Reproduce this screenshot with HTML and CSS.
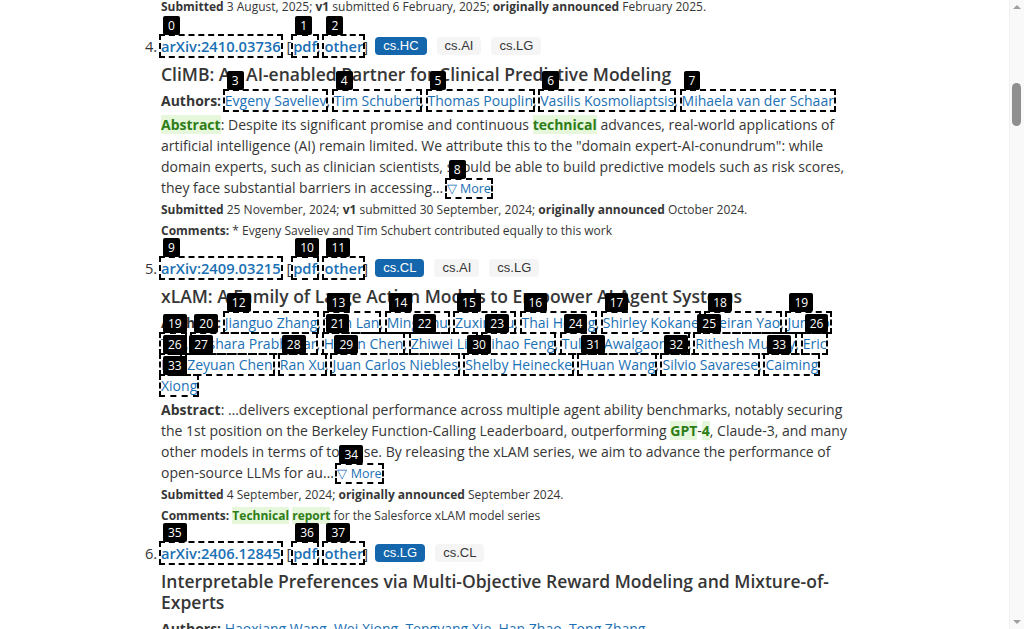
FILE: index.html
```html
<!DOCTYPE html>
<html>
<head>
<meta charset="utf-8">
<title>arXiv search results</title>
<link rel="stylesheet" href="styles.css">
</head>
<body>
<div class="page">
<main class="content">
<div class="prev">
<p class="meta top"><b>Submitted</b> 3 August, 2025; <b>v1</b> submitted 6 February, 2025; <b>originally announced</b> February 2025.</p>
</div>
<ol class="results" start="4">
<li class="result">
<p class="list-title"><a class="el id">arXiv:2410.03736<span class="lbl">0</span></a> <span class="fmt">[<a class="el">pdf<span class="lbl">1</span></a>, <a class="el">other<span class="lbl">2</span></a>]</span><span class="tags"><span class="tag primary">cs.HC</span><span class="tag">cs.AI</span><span class="tag">cs.LG</span></span></p>
<p class="title">CliMB: An AI-enabled Partner for Clinical Predictive Modeling</p>
<p class="authors"><span class="lab">Authors:</span> <a class="el">Evgeny Saveliev<span class="lbl">3</span></a>, <a class="el">Tim Schubert<span class="lbl">4</span></a>, <a class="el">Thomas Pouplin<span class="lbl">5</span></a>, <a class="el">Vasilis Kosmoliaptsis<span class="lbl">6</span></a>, <a class="el">Mihaela van der Schaar<span class="lbl">7</span></a></p>
<p class="abstract"><span class="hit">Abstract</span>: Despite its significant promise and continuous <span class="hit">technical</span> advances, real-world applications of artificial intelligence (AI) remain limited. We attribute this to the "domain expert-AI-conundrum": while domain experts, such as clinician scientists, should be able to build predictive models such as risk scores, they face substantial barriers in accessing&hellip; <a class="el more">&#9661; More<span class="lbl">8</span></a></p>
<p class="meta"><b>Submitted</b> 25 November, 2024; <b>v1</b> submitted 30 September, 2024; <b>originally announced</b> October 2024.</p>
<p class="meta comments"><b>Comments:</b> * Evgeny Saveliev and Tim Schubert contributed equally to this work</p>
</li>
<li class="result">
<p class="list-title"><a class="el id">arXiv:2409.03215<span class="lbl">9</span></a> <span class="fmt">[<a class="el">pdf<span class="lbl">10</span></a>, <a class="el">other<span class="lbl">11</span></a>]</span><span class="tags"><span class="tag primary">cs.CL</span><span class="tag">cs.AI</span><span class="tag">cs.LG</span></span></p>
<p class="title">xLAM: A Family of Large Action Models to Empower AI Agent Systems</p>
<p class="authors"><span class="lab">Authors:</span> <a class="el">Jianguo Zhang<span class="lbl">12</span></a>, <a class="el">Tian Lan<span class="lbl">13</span></a>, <a class="el">Ming Zhu<span class="lbl">14</span></a>, <a class="el">Zuxin Liu<span class="lbl">15</span></a>, <a class="el">Thai Hoang<span class="lbl">16</span></a>, <a class="el">Shirley Kokane<span class="lbl">17</span></a>, <a class="el">Weiran Yao<span class="lbl">18</span></a>, <a class="split"><span class="el">Juntao<span class="lbl">19</span></span> <span class="el">Tan<span class="lbl">19</span></span></a>, <a class="el">Akshara Prabhakar<span class="lbl">20</span></a>, <a class="el">Haolin Chen<span class="lbl">21</span></a>, <a class="el">Zhiwei Liu<span class="lbl">22</span></a>, <a class="el">Yihao Feng<span class="lbl">23</span></a>, <a class="el">Tulika Awalgaonkar<span class="lbl">24</span></a>, <a class="el">Rithesh Murthy<span class="lbl">25</span></a>, <a class="split"><span class="el">Eric<span class="lbl">26</span></span> <span class="el">Hu<span class="lbl">26</span></span></a>, <a class="el">Zeyuan Chen<span class="lbl">27</span></a>, <a class="el">Ran Xu<span class="lbl">28</span></a>, <a class="el">Juan Carlos Niebles<span class="lbl">29</span></a>, <a class="el">Shelby Heinecke<span class="lbl">30</span></a>, <a class="el">Huan Wang<span class="lbl">31</span></a>, <a class="el">Silvio Savarese<span class="lbl">32</span></a>, <a class="split"><span class="el">Caiming<span class="lbl">33</span></span> <span class="el">Xiong<span class="lbl">33</span></span></a></p>
<p class="abstract"><span class="lab">Abstract</span>: &hellip;delivers exceptional performance across multiple agent ability benchmarks, notably securing the 1st position on the Berkeley Function-Calling Leaderboard, outperforming <span class="hit">GPT</span>-<span class="hit">4</span>, Claude-3, and many other models in terms of tool use. By releasing the xLAM series, we aim to advance the performance of open-source LLMs for au&hellip; <a class="el more">&#9661; More<span class="lbl">34</span></a></p>
<p class="meta"><b>Submitted</b> 4 September, 2024; <b>originally announced</b> September 2024.</p>
<p class="meta comments"><b>Comments:</b> <span class="hit">Technical</span> <span class="hit">report</span> for the Salesforce xLAM model series</p>
</li>
<li class="result">
<p class="list-title"><a class="el id">arXiv:2406.12845<span class="lbl">35</span></a> <span class="fmt">[<a class="el">pdf<span class="lbl">36</span></a>, <a class="el">other<span class="lbl">37</span></a>]</span><span class="tags"><span class="tag primary">cs.LG</span><span class="tag">cs.CL</span></span></p>
<p class="title">Interpretable Preferences via Multi-Objective Reward Modeling and Mixture-of-Experts</p>
<p class="authors"><span class="lab">Authors:</span> <a class="plain">Haoxiang Wang</a>, <a class="plain">Wei Xiong</a>, <a class="plain">Tengyang Xie</a>, <a class="plain">Han Zhao</a>, <a class="plain">Tong Zhang</a></p>
</li>
</ol>
</main>
</div>
<div class="scrollbar" aria-hidden="true">
<span class="arrow up"></span>
<span class="thumb"></span>
<span class="arrow down"></span>
</div>
</body>
</html>
```

FILE: styles.css
```css
html, body {
  margin: 0;
  height: 100%;
  overflow: hidden;
  background: #fff;
}
body {
  font-family: "Open Sans", "Liberation Sans", sans-serif;
  color: #363636;
}
.page {
  padding-right: 15px;
}
.content {
  margin-top: -2px;
}
p { margin: 0; }
a { color: #1a70b5; text-decoration: none; }
b { font-weight: 700; }

.prev {
  padding-left: 161px;
}
.meta {
  font-size: 12px;
  line-height: 18px;
  margin-top: 2px;
}
.meta.top { margin-top: 0; }
.meta.comments { margin-top: 3.5px; }

.results {
  margin: 18px 0 0;
  padding: 0 0 0 161px;
  max-width: 690px;
}
.result {
  font-size: 14.7px;
  margin-bottom: 16px;
}
.list-title {
  height: 24px;
  line-height: 24px;
}
.list-title .id,
.list-title .fmt a {
  font-weight: 600;
}
.fmt {
  margin-left: 2px;
}
.fmt a:first-child {
  margin-left: 2px;
}
.tags {
  display: inline-flex;
  gap: 10px;
  margin-left: 7px;
  vertical-align: top;
  padding-top: 3px;
}
.tag {
  font-family: "Liberation Sans", Arial, sans-serif;
  font-size: 13px;
  height: 18px;
  line-height: 18px;
  padding: 0 8px;
  border-radius: 4px;
  background: #f5f5f5;
  color: #363636;
}
.tag.primary {
  background: #1467ac;
  color: #fff;
}

.title {
  font-size: 17.5px;
  font-weight: 600;
  line-height: 21px;
  margin-top: 6px;
}
.authors {
  font-size: 14px;
  line-height: 21px;
  margin-top: 4.5px;
}
.lab { font-weight: 700; }
.abstract {
  font-size: 14px;
  line-height: 21px;
  margin-top: 3px;
}
.hit {
  color: #2e7d17;
  background: #e6f7dc;
  font-weight: 700;
}
.more { font-size: 12.5px; }

/* annotation overlay */
.el {
  position: relative;
  outline: 2px dashed #000;
}
.split { position: static; }
.lbl {
  position: absolute;
  left: 2px;
  bottom: calc(100% + 1px);
  z-index: 10;
  background: #000;
  color: #fff;
  font-family: "Open Sans", sans-serif;
  font-weight: 400;
  font-size: 12px;
  line-height: 19px;
  height: 19px;
  padding: 0 5px;
  border-radius: 2px;
  white-space: nowrap;
}

/* fake scrollbar */
.scrollbar {
  position: fixed;
  top: 0;
  right: 0;
  width: 15px;
  height: 100%;
  background: #f9f9f9;
  border-left: 1px solid #f0f0f0;
  box-sizing: border-box;
}
.arrow {
  position: absolute;
  left: 3px;
  width: 0;
  height: 0;
  border-left: 4px solid transparent;
  border-right: 4px solid transparent;
}
.arrow.up { top: 5px; border-bottom: 4px solid #a0a0a0; }
.arrow.down { bottom: 5px; border-top: 4px solid #a0a0a0; }
.thumb {
  position: absolute;
  left: 2px;
  top: 83px;
  width: 9px;
  height: 43px;
  border-radius: 5px;
  background: #8f8f8f;
}
```
